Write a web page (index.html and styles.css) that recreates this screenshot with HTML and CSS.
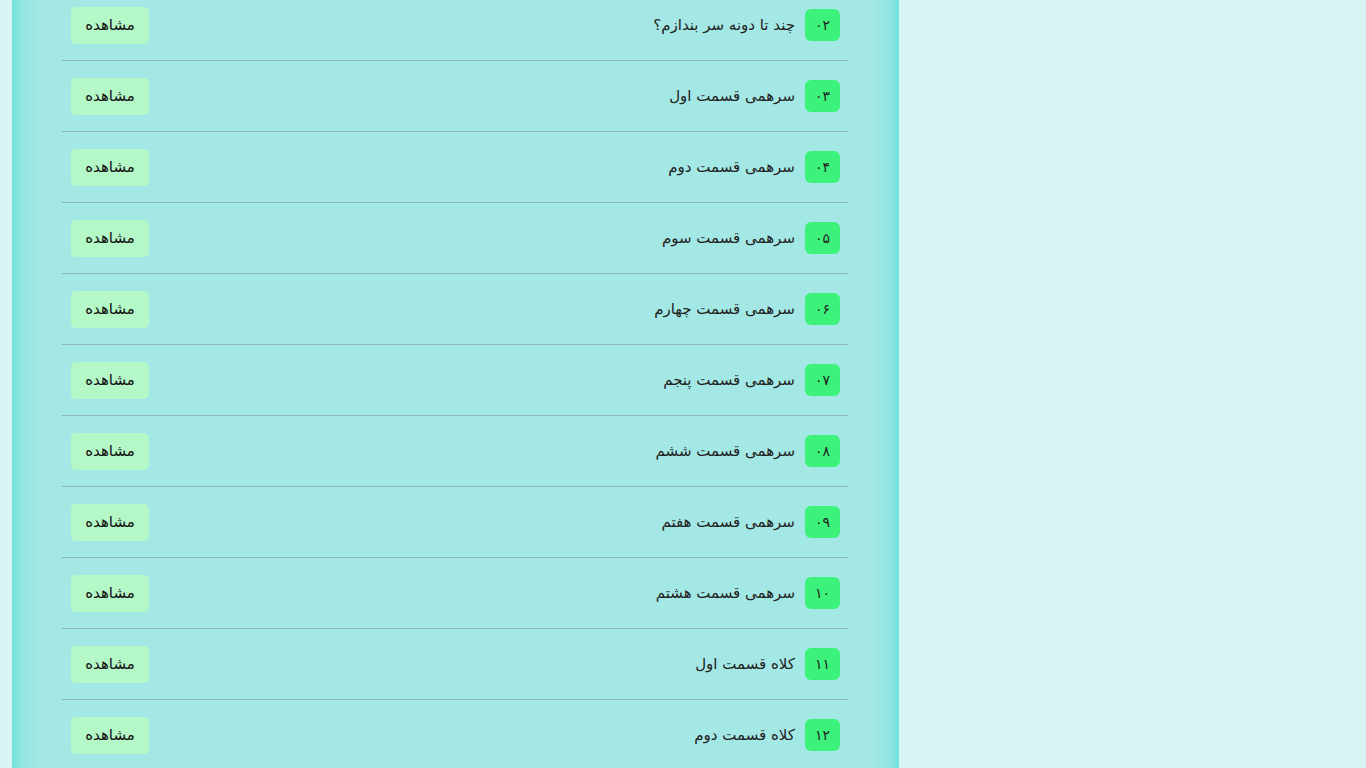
FILE: index.html
```html
<!DOCTYPE html>
<html lang="fa" dir="rtl">
<head>
<meta charset="utf-8">
<title>لیست قسمت‌ها</title>
<link rel="stylesheet" href="styles.css">
</head>
<body>
<div class="page">
  <main class="panel">
    <ul class="episodes">
      <li class="row"><span class="num">۰۲</span><span class="title">چند تا دونه سر بندازم؟</span><a class="watch" href="#">مشاهده</a></li>
      <li class="row"><span class="num">۰۳</span><span class="title">سرهمی قسمت اول</span><a class="watch" href="#">مشاهده</a></li>
      <li class="row"><span class="num">۰۴</span><span class="title">سرهمی قسمت دوم</span><a class="watch" href="#">مشاهده</a></li>
      <li class="row"><span class="num">۰۵</span><span class="title">سرهمی قسمت سوم</span><a class="watch" href="#">مشاهده</a></li>
      <li class="row"><span class="num">۰۶</span><span class="title">سرهمی قسمت چهارم</span><a class="watch" href="#">مشاهده</a></li>
      <li class="row"><span class="num">۰۷</span><span class="title">سرهمی قسمت پنجم</span><a class="watch" href="#">مشاهده</a></li>
      <li class="row"><span class="num">۰۸</span><span class="title">سرهمی قسمت ششم</span><a class="watch" href="#">مشاهده</a></li>
      <li class="row"><span class="num">۰۹</span><span class="title">سرهمی قسمت هفتم</span><a class="watch" href="#">مشاهده</a></li>
      <li class="row"><span class="num">۱۰</span><span class="title">سرهمی قسمت هشتم</span><a class="watch" href="#">مشاهده</a></li>
      <li class="row"><span class="num">۱۱</span><span class="title">کلاه قسمت اول</span><a class="watch" href="#">مشاهده</a></li>
      <li class="row"><span class="num">۱۲</span><span class="title">کلاه قسمت دوم</span><a class="watch" href="#">مشاهده</a></li>
    </ul>
  </main>
</div>
</body>
</html>
```
FILE: styles.css
```css
html, body {
  margin: 0;
  padding: 0;
  height: 100%;
  overflow: hidden;
}
body {
  background: #d7f5f4;
  font-family: "DejaVu Sans", "Noto Sans", sans-serif;
  color: #222;
}
.page {
  direction: ltr;
  padding-left: 12px;
  height: 100%;
}
.panel {
  display: flow-root;
  direction: rtl;
  width: 887px;
  background: linear-gradient(to right, #6ee1dd 0, #8fe5e1 8px, #a3e8e4 26px, #a3e8e4 calc(100% - 26px), #8fe5e1 calc(100% - 8px), #6ee1dd 100%);
  padding: 0 51px 0 50px;
  box-sizing: border-box;
  height: 100%;
}
.episodes {
  list-style: none;
  margin: -10px 0 0 0;
  padding: 0;
}
.row {
  display: flex;
  align-items: center;
  height: 71px;
  padding: 0 8px 0 9px;
  border-bottom: 1px solid #8fb5b3;
  box-sizing: border-box;
}
.num {
  display: flex;
  align-items: center;
  justify-content: center;
  height: 32px;
  padding: 0 10px;
  background: #3cf27a;
  border-radius: 6px;
  font-size: 14px;
  color: #222;
}
.title {
  margin-right: 10px;
  font-size: 15px;
  color: #222;
}
.watch {
  margin-right: auto;
  display: flex;
  align-items: center;
  justify-content: center;
  width: 78px;
  height: 37px;
  background: #b3f8c6;
  border-radius: 5px;
  font-size: 15px;
  color: #111;
  text-decoration: none;
}
```
